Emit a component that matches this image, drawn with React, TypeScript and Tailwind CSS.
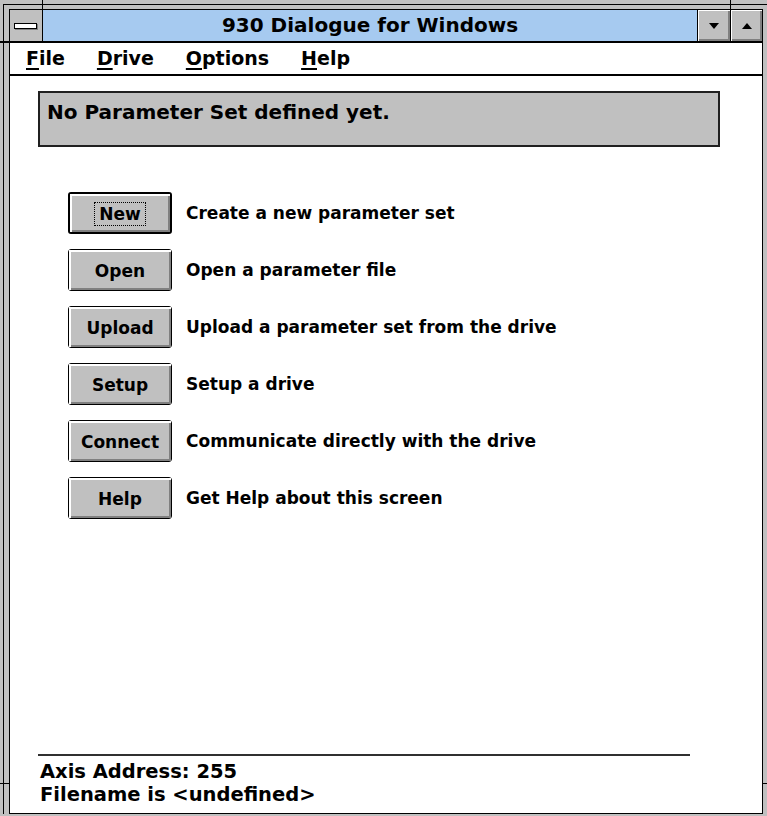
import React from "react";

type ActionProps = { label: string; text: string; focused?: boolean };

function ActionButton({ label, focused }: { label: string; focused?: boolean }) {
  return (
    <div
      className={`w-[104px] h-[42px] shrink-0 rounded-[3px] border-black bg-[#c0c0c0] flex ${
        focused ? "border-2" : "border"
      }`}
    >
      <div className="flex-1 flex items-center justify-center pt-[2px] shadow-[inset_2px_2px_0_#ffffff,inset_-2px_-2px_0_#808080]">
        {focused ? (
          <span className="border border-dotted border-black px-[4px] leading-[22px]">{label}</span>
        ) : (
          <span className="leading-[22px]">{label}</span>
        )}
      </div>
    </div>
  );
}

function ActionRow({ label, text, focused }: ActionProps) {
  return (
    <div className="flex items-center gap-[14px] text-[17px]">
      <ActionButton label={label} focused={focused} />
      <span className="pt-[2px]">{text}</span>
    </div>
  );
}

function CaptionButton({ dir, className }: { dir: "down" | "up"; className: string }) {
  return (
    <div className={`h-full bg-[#c0c0c0] border-black flex items-center justify-center shadow-[inset_1px_1px_0_#ffffff,inset_-2px_-2px_0_#808080] ${className}`}>
      <svg width="10" height="6" viewBox="0 0 10 6">
        {dir === "down" ? (
          <polygon points="0,0 10,0 5,6" fill="#000" />
        ) : (
          <polygon points="0,6 10,6 5,0" fill="#000" />
        )}
      </svg>
    </div>
  );
}

function MenuItem({ first, rest }: { first: string; rest: string }) {
  return (
    <span>
      <span className="underline decoration-2 underline-offset-[3px]">{first}</span>
      {rest}
    </span>
  );
}

const actions: ActionProps[] = [
  { label: "New", text: "Create a new parameter set", focused: true },
  { label: "Open", text: "Open a parameter file" },
  { label: "Upload", text: "Upload a parameter set from the drive" },
  { label: "Setup", text: "Setup a drive" },
  { label: "Connect", text: "Communicate directly with the drive" },
  { label: "Help", text: "Get Help about this screen" },
];

export default function App() {
  return (
    <div className="w-[767px] h-[816px] bg-[#c0c0c0] overflow-hidden relative font-['DejaVu_Sans','Liberation_Sans',sans-serif] font-bold text-black">
      {/* sizing frame */}
      <div className="ml-[3px] mt-[4px] w-[770px] border-l border-t border-black pl-[5px] pt-[4px]">
        <div className="w-[754px] h-[805px] border border-black bg-white flex flex-col">
          {/* caption bar */}
          <div className="h-[33px] flex border-b-2 border-black bg-[#a6caf0]">
            <div className="w-[33px] h-full border-r border-black bg-[#c0c0c0] flex items-center justify-center pr-[1px]">
              <div className="w-[23px] h-[6px] border border-black bg-white shadow-[1px_1px_0_#808080]" />
            </div>
            <div className="flex-1 text-center text-[20px] leading-[31px]">930 Dialogue for Windows</div>
            <CaptionButton dir="down" className="w-[33px] border-l" />
            <CaptionButton dir="up" className="w-[32px] border-l" />
          </div>

          {/* menu bar */}
          <div className="h-[33px] flex gap-[32px] pl-[16px] border-b-2 border-black text-[19px] leading-[31px]">
            <MenuItem first="F" rest="ile" />
            <MenuItem first="D" rest="rive" />
            <MenuItem first="O" rest="ptions" />
            <MenuItem first="H" rest="elp" />
          </div>

          {/* client area */}
          <div className="flex-1 flex flex-col">
            <div className="mt-[15px] ml-[28px] w-[682px] h-[56px] border-2 border-[#202020] bg-[#c0c0c0] pl-[7px] pt-[7px] text-[20px] leading-[24px]">
              No Parameter Set defined yet.
            </div>

            <div className="mt-[45px] ml-[58px] flex flex-col gap-[15px]">
              {actions.map((a) => (
                <ActionRow key={a.label} {...a} />
              ))}
            </div>

            <div className="mt-auto pb-[7px]">
              <div className="ml-[28px] w-[652px] h-[2px] bg-[#303030]" />
              <div className="ml-[30px] pt-[4px] text-[19.5px] leading-[23px]">
                <div>Axis Address: 255</div>
                <div>Filename is &lt;undefined&gt;</div>
              </div>
            </div>
          </div>
        </div>
      </div>

      {/* resize ticks on the frame */}
      <div className="absolute left-[42px] top-0 w-px h-[10px] bg-black" />
      <div className="absolute left-[730px] top-0 w-px h-[10px] bg-black" />
      <div className="absolute left-0 top-[41px] w-[10px] h-[2px] bg-black" />
      <div className="absolute left-0 top-[783px] w-[10px] h-px bg-black" />
      <div className="absolute left-[763px] top-[783px] w-[4px] h-px bg-black" />
    </div>
  );
}
